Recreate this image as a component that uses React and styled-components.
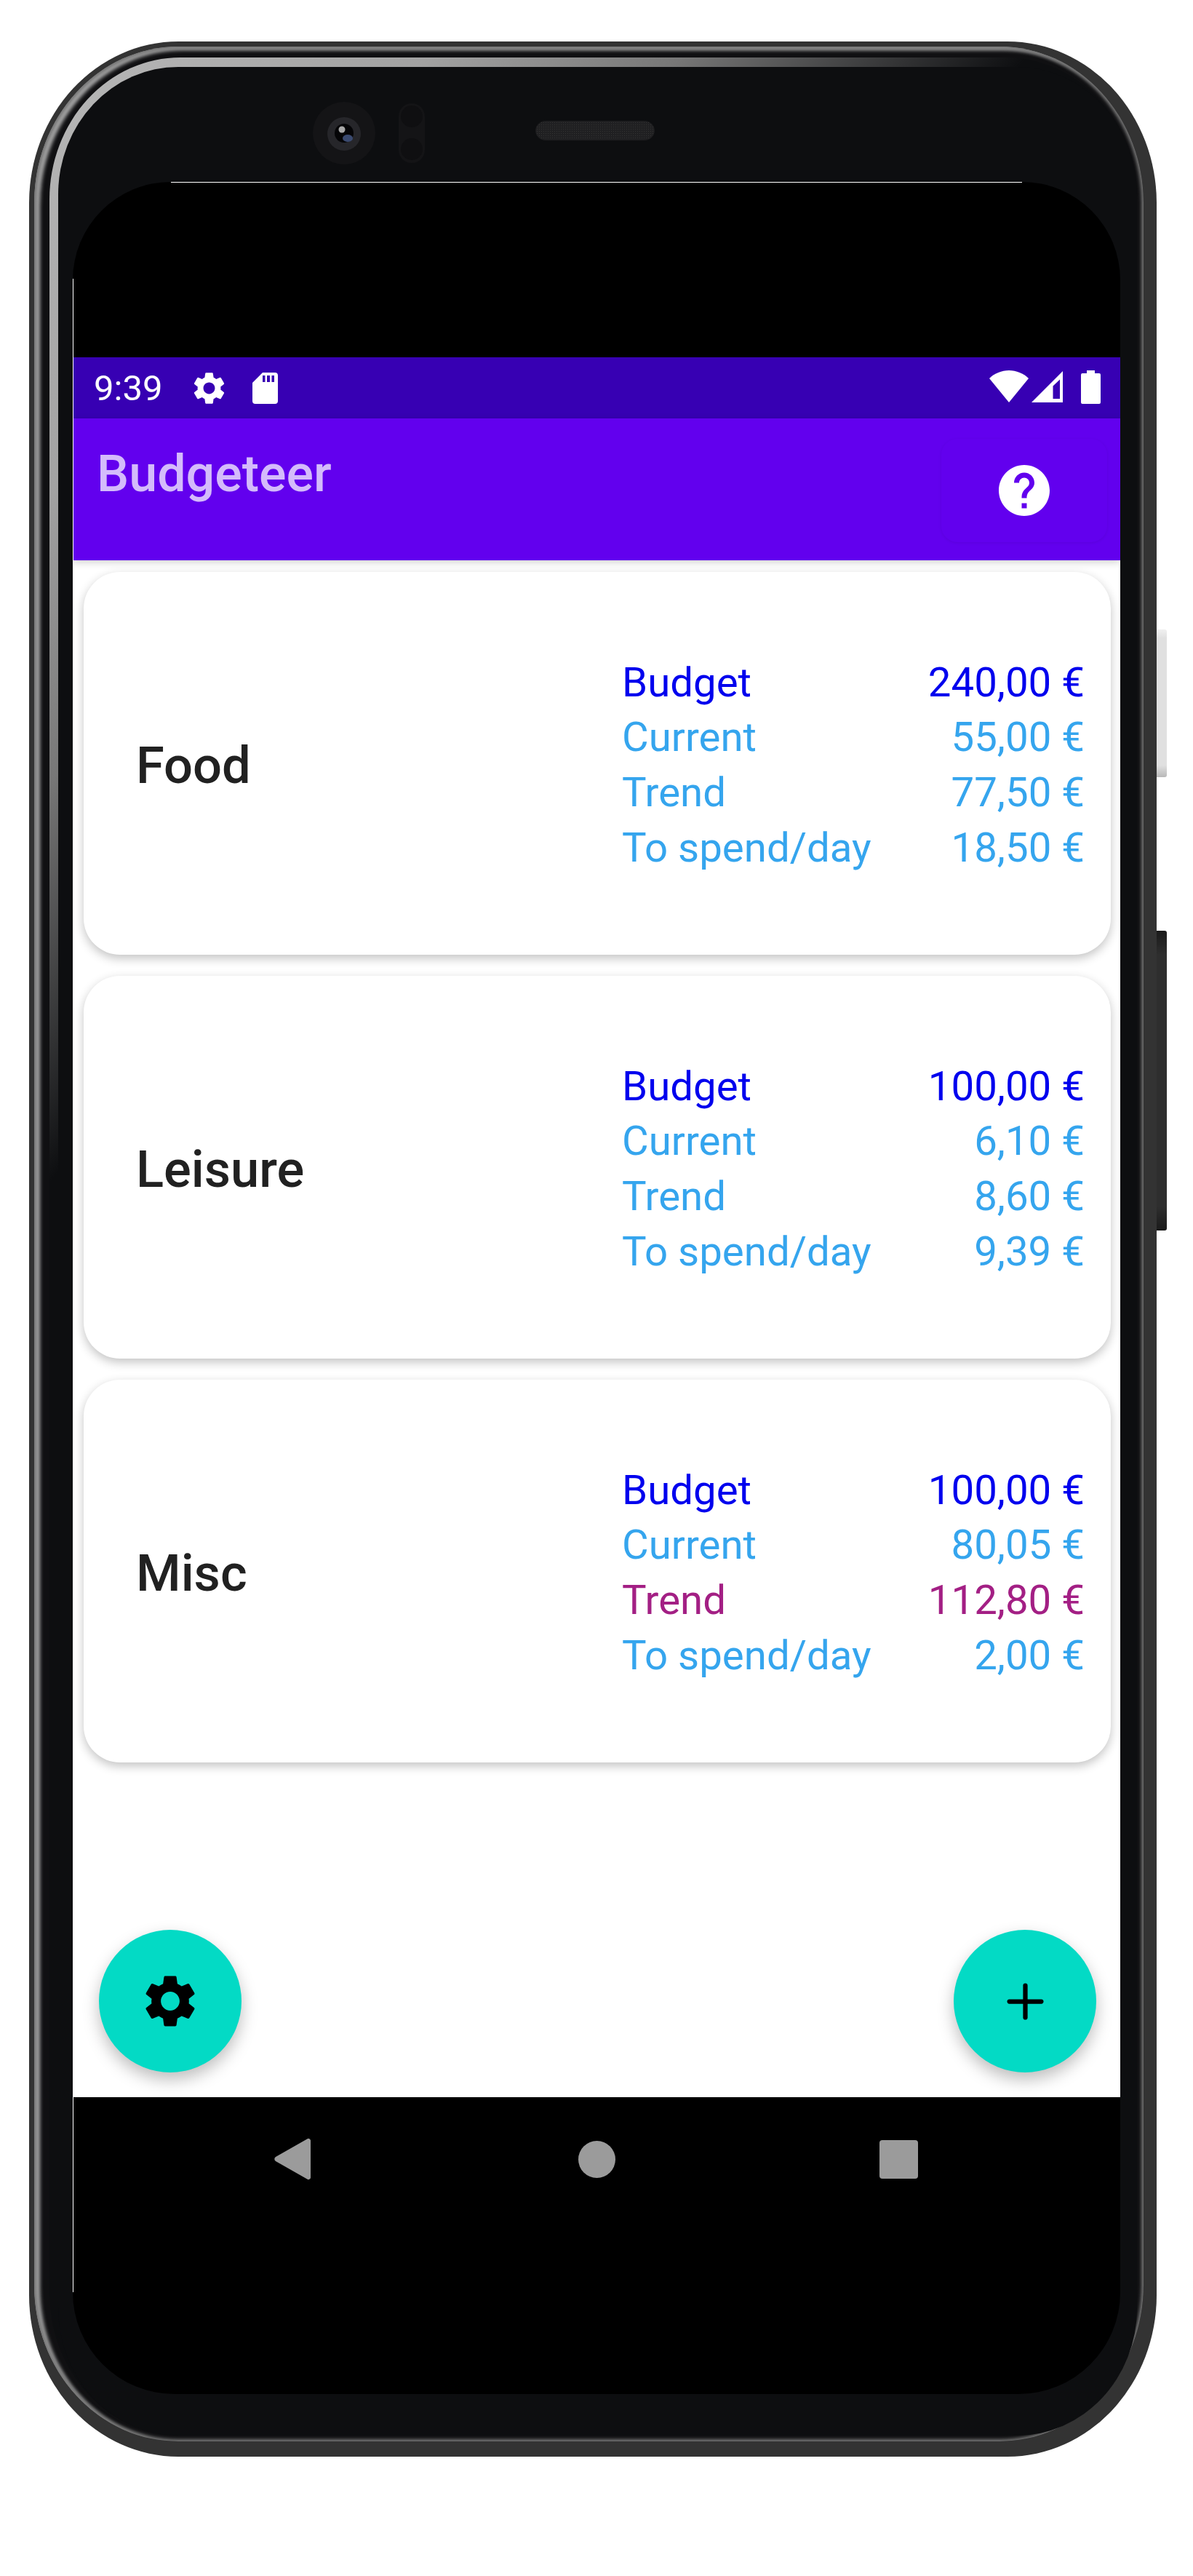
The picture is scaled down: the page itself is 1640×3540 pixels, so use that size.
import React from 'react';
import styled, { createGlobalStyle } from 'styled-components';
import { MdSettings, MdHelp } from 'react-icons/md';
import { Plus } from 'lucide-react';

const GlobalStyle = createGlobalStyle`
  html, body {
    margin: 0;
    background: #fff;
  }
  * {
    box-sizing: border-box;
  }
  body {
    font-family: Roboto, "Liberation Sans", sans-serif;
  }
`;

const Page = styled.div`
  width: 1640px;
  height: 3540px;
  padding: 57px 0 0 40px;
`;

const Phone = styled.div`
  position: relative;
  width: 1550px;
  height: 3319px;
`;

const SideButton = styled.div`
  position: absolute;
  left: 1550px;
  top: ${(props) => props.$top}px;
  width: 14px;
  height: ${(props) => props.$height}px;
  border-radius: 0 3px 3px 0;
  background: ${(props) => (props.$dark
    ? 'linear-gradient(#1a1a1a, #2e2e2e 8%, #2e2e2e 92%, #1a1a1a)'
    : 'linear-gradient(#f0f0f0, #e0e0e0 6%, #e0e0e0 92%, #b8b8b8)')};
`;

const Shell = styled.div`
  height: 100%;
  padding: 7px 18px 21px 7px;
  background: #333;
  border-radius: 205px / 222px;
`;

const Rim = styled.div`
  height: 100%;
  padding: 15px 9px 8px 21px;
  background: #101012;
  border-radius: 198px / 215px;
  box-shadow: inset 0 0 4px 3px #747474, inset 7px 4px 5px 1px #a8a8a8;
`;

const Bevel = styled.div`
  height: 100%;
  padding: 13px 0 0 12px;
  border-radius: 180px / 195px;
  background: linear-gradient(131deg, #b8b8b8 0, #a2a2a2 12%, #777 20%, #0d0e10 31%);
`;

const Bezel = styled.div`
  height: 100%;
  padding: 0 23px 57px 20px;
  background: #0d0e10;
  border-radius: 165px / 175px;
`;

const Sensors = styled.div`
  display: flex;
  align-items: center;
  height: 158px;
  padding: 48px 0 24px 330px;
`;

const Camera = styled.svg`
  width: 86px;
  height: 86px;
  flex: none;
`;

const ProximitySensor = styled.svg`
  width: 36px;
  height: 82px;
  flex: none;
  margin-left: 32px;
`;

const Speaker = styled.div`
  width: 164px;
  height: 27px;
  margin: 0 0 7px 152px;
  border-radius: 14px;
  border: 1px solid #1d1d1f;
  background-color: #202022;
  background-image: radial-gradient(#333 0.8px, transparent 0.9px);
  background-size: 3px 3px;
`;

const Screen = styled.div`
  position: relative;
  display: flex;
  flex-direction: column;
  width: 1440px;
  height: 3040px;
  background: #000;
  border-radius: 135px 135px 140px 140px;
  overflow: hidden;

  &::before {
    content: '';
    position: absolute;
    z-index: 2;
    top: 0;
    left: 135px;
    right: 135px;
    height: 1px;
    background: #fff;
  }

  &::after {
    content: '';
    position: absolute;
    z-index: 2;
    top: 133px;
    bottom: 140px;
    left: 0;
    width: 1px;
    background: #fff;
  }
`;

const CameraArea = styled.div`
  height: 241px;
  flex: none;
`;

const StatusBar = styled.div`
  display: flex;
  align-items: center;
  height: 84px;
  flex: none;
  padding: 0 27px 0 29px;
  background: #3700b3;
  color: #fff;
`;

const Time = styled.span`
  width: 92px;
  font-size: 49px;
  margin-right: 40px;
`;

const StatusIcons = styled.div`
  display: flex;
  align-items: center;
  margin-left: auto;
`;

const StatusGlyph = styled.svg`
  display: block;
  flex: none;
  fill: #fff;
  margin-left: ${(props) => props.$gap || 0}px;
  margin-bottom: ${(props) => props.$lift || 0}px;
`;

const AppBar = styled.header`
  position: relative;
  z-index: 1;
  display: flex;
  justify-content: space-between;
  align-items: flex-start;
  height: 195px;
  flex: none;
  padding: 28px 18px 0 33px;
  background: #6200ee;
  box-shadow: 0 3px 10px rgba(0, 0, 0, .18);
`;

const Title = styled.h1`
  margin: 7px 0 0;
  font-size: 70px;
  font-weight: 500;
  color: #d4bbfb;
`;

const HelpButton = styled.button`
  display: flex;
  align-items: center;
  justify-content: center;
  width: 228px;
  height: 142px;
  padding: 0;
  border: none;
  border-radius: 22px;
  background: #6200ee;
  color: #fff;
  box-shadow: 0 1px 4px rgba(0, 0, 0, .08);
`;

const Content = styled.main`
  position: relative;
  display: flex;
  flex-direction: column;
  gap: 29px;
  height: 2112px;
  flex: none;
  padding: 16px 13px 0 15px;
  background: #fff;
`;

const Card = styled.article`
  display: flex;
  justify-content: space-between;
  align-items: center;
  height: 526px;
  flex: none;
  padding: 6px 36px 0 72px;
  border-radius: 50px;
  background: #fff;
  box-shadow: 0 5px 14px rgba(0, 0, 0, .24);
`;

const CategoryName = styled.h2`
  margin: 0;
  font-size: 70.5px;
  font-weight: 500;
  color: #212121;
`;

const Figures = styled.div`
  display: grid;
  grid-template-columns: 1fr auto;
  width: 636px;
  font-size: 56.4px;
  line-height: 75.6px;
`;

const toneColors = {
  budget: '#0000ee',
  normal: '#35a5ee',
  over: '#a31f84',
};

const FigureLabel = styled.span`
  color: ${(props) => toneColors[props.$tone]};
`;

const FigureValue = styled.span`
  text-align: right;
  color: ${(props) => toneColors[props.$tone]};
`;

const Fab = styled.button`
  position: absolute;
  bottom: 34px;
  ${(props) => (props.$side === 'left' ? 'left: 36px;' : 'right: 33px;')}
  display: flex;
  align-items: center;
  justify-content: center;
  width: 196px;
  height: 196px;
  padding: 0;
  border: none;
  border-radius: 50%;
  background: #03dac5;
  color: #000;
  box-shadow: 0 10px 22px rgba(0, 0, 0, .26);
`;

const NavBar = styled.nav`
  display: flex;
  align-items: center;
  height: 170px;
  flex: none;
  padding: 0 0 0 277px;
`;

const BackKey = styled.svg`
  width: 50px;
  height: 58px;
  fill: #9b9b9b;
`;

const HomeKey = styled.div`
  width: 51px;
  height: 51px;
  margin-left: 368px;
  border-radius: 50%;
  background: #9b9b9b;
`;

const RecentsKey = styled.div`
  width: 53px;
  height: 53px;
  margin-left: 363px;
  border-radius: 4px;
  background: #9b9b9b;
`;

const budgets = [
  { name: 'Food', budget: '240,00 €', current: '55,00 €', trend: '77,50 €', perDay: '18,50 €' },
  { name: 'Leisure', budget: '100,00 €', current: '6,10 €', trend: '8,60 €', perDay: '9,39 €' },
  { name: 'Misc', budget: '100,00 €', current: '80,05 €', trend: '112,80 €', perDay: '2,00 €', over: true },
];

function Figure({ label, value, tone }) {
  return (
    <>
      <FigureLabel $tone={tone}>{label}</FigureLabel>
      <FigureValue $tone={tone}>{value}</FigureValue>
    </>
  );
}

function BudgetCard({ item }) {
  return (
    <Card>
      <CategoryName>{item.name}</CategoryName>
      <Figures>
        <Figure label="Budget" value={item.budget} tone="budget" />
        <Figure label="Current" value={item.current} tone="normal" />
        <Figure label="Trend" value={item.trend} tone={item.over ? 'over' : 'normal'} />
        <Figure label="To spend/day" value={item.perDay} tone="normal" />
      </Figures>
    </Card>
  );
}

function SdCardIcon() {
  return (
    <StatusGlyph width="35" height="43" viewBox="0 0 35 43">
      <path
        fillRule="evenodd"
        d="M14 0H31a4 4 0 0 1 4 4V39a4 4 0 0 1-4 4H4a4 4 0 0 1-4-4V14ZM14 4V13H17.5V4ZM20 4V13H24V4ZM26.5 4V13H30V4Z"
      />
    </StatusGlyph>
  );
}

function App() {
  return (
    <Page>
      <GlobalStyle />
      <Phone>
        <SideButton $top={808} $height={203} />
        <SideButton $top={1222} $height={412} $dark />
        <Shell>
          <Rim>
            <Bevel>
              <Bezel>
                <Sensors>
                  <Camera viewBox="0 0 86 86">
                    <circle cx="43" cy="43" r="43" fill="#141416" />
                    <circle cx="43" cy="44" r="23" fill="#26262a" />
                    <circle cx="43" cy="43" r="13" fill="#050507" />
                    <circle cx="40" cy="38" r="4.5" fill="#a8a8a8" />
                    <ellipse cx="48" cy="50" rx="7" ry="5" fill="#3a4a70" />
                  </Camera>
                  <ProximitySensor viewBox="0 0 36 82">
                    <rect width="36" height="82" rx="18" fill="#141416" />
                    <circle cx="18" cy="18" r="15" fill="#0f0f11" />
                    <circle cx="18" cy="63" r="15" fill="#0f0f11" />
                  </ProximitySensor>
                  <Speaker />
                </Sensors>
                <Screen>
                  <CameraArea />
                  <StatusBar>
                    <Time>9:39</Time>
                    <MdSettings size={53} />
                    <StatusGlyph as="span" $gap={33} />
                    <SdCardIcon />
                    <StatusIcons>
                      <StatusGlyph width="54" height="44" viewBox="0 0 54 44" $lift={4}>
                        <path d="M0 11C7 4 17 0 27 0C37 0 47 4 54 11L27 44Z" />
                      </StatusGlyph>
                      <StatusGlyph width="43" height="43" viewBox="0 0 43 43" $gap={4} $lift={3}>
                        <path
                          fillRule="evenodd"
                          d="M43 0V43H0ZM39 11.5L29.5 20.5V38H39Z"
                        />
                      </StatusGlyph>
                      <StatusGlyph width="27" height="46" viewBox="0 0 27 46" $gap={25} $lift={2}>
                        <path d="M8 0H19V4H25a2 2 0 0 1 2 2V44a2 2 0 0 1-2 2H2a2 2 0 0 1-2-2V6a2 2 0 0 1 2-2H8Z" />
                      </StatusGlyph>
                    </StatusIcons>
                  </StatusBar>
                  <AppBar>
                    <Title>Budgeteer</Title>
                    <HelpButton aria-label="Help">
                      <MdHelp size={84} />
                    </HelpButton>
                  </AppBar>
                  <Content>
                    {budgets.map((item) => <BudgetCard key={item.name} item={item} />)}
                    <Fab $side="left" aria-label="Settings"><MdSettings size={86} /></Fab>
                    <Fab $side="right" aria-label="Add"><Plus size={75} strokeWidth={2} /></Fab>
                  </Content>
                  <NavBar>
                    <BackKey viewBox="0 0 50 58">
                      <path d="M46 1a3 3 0 0 1 4 3V54a3 3 0 0 1-4 3L2 32a3.500 3.500 0 0 1 0-6Z" />
                    </BackKey>
                    <HomeKey />
                    <RecentsKey />
                  </NavBar>
                </Screen>
              </Bezel>
            </Bevel>
          </Rim>
        </Shell>
      </Phone>
    </Page>
  );
}

export default App;
